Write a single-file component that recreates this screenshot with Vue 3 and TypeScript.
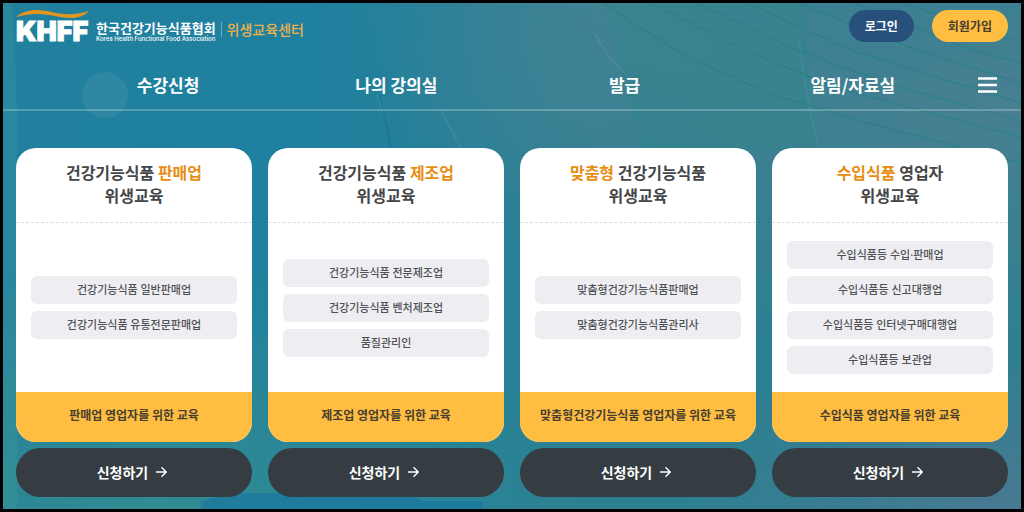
<script setup lang="ts">
interface TitlePart {
  text: string
  accent: boolean
}

interface Course {
  id: string
  title: TitlePart[]
  items: string[]
  note: string
}

const menu: string[] = ['수강신청', '나의 강의실', '발급', '알림/자료실']

const courses: Course[] = [
  {
    id: 'sales',
    title: [
      { text: '건강기능식품', accent: false },
      { text: '판매업', accent: true },
    ],
    items: ['건강기능식품 일반판매업', '건강기능식품 유통전문판매업'],
    note: '판매업 영업자를 위한 교육',
  },
  {
    id: 'manufacture',
    title: [
      { text: '건강기능식품', accent: false },
      { text: '제조업', accent: true },
    ],
    items: ['건강기능식품 전문제조업', '건강기능식품 벤처제조업', '품질관리인'],
    note: '제조업 영업자를 위한 교육',
  },
  {
    id: 'custom',
    title: [
      { text: '맞춤형', accent: true },
      { text: '건강기능식품', accent: false },
    ],
    items: ['맞춤형건강기능식품판매업', '맞춤형건강기능식품관리사'],
    note: '맞춤형건강기능식품 영업자를 위한 교육',
  },
  {
    id: 'import',
    title: [
      { text: '수입식품', accent: true },
      { text: '영업자', accent: false },
    ],
    items: ['수입식품등 수입·판매업', '수입식품등 신고대행업', '수입식품등 인터넷구매대행업', '수입식품등 보관업'],
    note: '수입식품 영업자를 위한 교육',
  },
]
</script>

<template>
  <div class="page">
    <svg class="backdrop" viewBox="0 0 1018 506" preserveAspectRatio="none" aria-hidden="true">
      <circle cx="102" cy="92" r="23" fill="#8fc0c4" opacity="0.13" />
      <path d="M9 0 Q13 60 14 110 V506 H0 V0 Z" fill="#5fae9f" opacity="0.16" />
      <path d="M376 92 Q384 120 388 148" fill="none" stroke="#0f6690" stroke-width="2" opacity="0.35" />
      <path d="M374 92 L380 110 M438 108 L460 148" fill="none" stroke="#9cc9d4" stroke-width="2" opacity="0.12" />
      <path d="M592 30 Q604 55 622 70 M796 36 Q802 90 816 148" fill="none" stroke="#9cc9d4" stroke-width="2" opacity="0.12" />
      <path d="M600 0 L800 0 L816 148 L640 148 Z" fill="#1f8a86" opacity="0.18" />
      <g fill="none" stroke="#14807f" stroke-width="1" opacity="0.6">
        <path d="M600 0 L680 52 L765 90 L865 120 L1018 160" />
        <path d="M648 0 L740 46 L830 84 L1018 134" />
        <path d="M694 0 L790 46 L890 82 L1018 118" />
        <path d="M744 0 L850 48 L1018 100" />
        <path d="M796 0 L900 42 L1018 80" />
        <path d="M850 0 L960 44 L1018 60" />
        <path d="M900 0 L1018 40" />
      </g>
      <path d="M198 498 L230 490 H400 L420 498 H480 V506 H198 Z" fill="#126fa6" opacity="0.5" />
      <g fill="none" stroke="#33888e" stroke-width="1" opacity="0.6">
        <path d="M840 506 L1018 436" />
        <path d="M880 506 L1018 452" />
        <path d="M920 506 L1018 468" />
      </g>
    </svg>

    <header class="header">
      <div class="topbar">
        <a class="logo" href="#">
          <span class="mark">
            <svg class="wave" viewBox="0 0 73 10" aria-hidden="true">
              <path
                d="M0 7 C6 2 13 0 21 0 C32 0 40 4 49 4 C58 5 65 3 73 1 C67 7 61 8 54 8 C44 8 34 4 22 4 C14 4 8 5 0 7 Z"
                fill="#e2961f"
              />
            </svg>
            <span class="initials">KHFF</span>
          </span>
          <span class="names">
            <span class="name-ko">한국건강기능식품협회</span>
            <span class="name-en">Korea Health Functional Food Association</span>
          </span>
          <span class="center-name">위생교육센터</span>
        </a>
        <div class="account">
          <button type="button" class="pill login">로그인</button>
          <button type="button" class="pill join">회원가입</button>
        </div>
      </div>
      <div class="menubar">
        <nav class="nav">
          <a v-for="entry in menu" :key="entry" href="#">{{ entry }}</a>
        </nav>
        <button type="button" class="all-menu" aria-label="전체메뉴">
          <svg width="19" height="16" viewBox="0 0 19 16" aria-hidden="true">
            <path d="M0 1.5H19M0 8H19M0 14.5H19" stroke="#fff" stroke-width="2.4" />
          </svg>
        </button>
      </div>
    </header>

    <main class="courses">
      <section v-for="course in courses" :key="course.id" class="course">
        <article class="card">
          <h2 class="title">
            <template v-for="(part, index) in course.title" :key="part.text">
              <template v-if="index > 0">{{ ' ' }}</template>
              <span :class="{ accent: part.accent }">{{ part.text }}</span>
            </template>
            <br />위생교육
          </h2>
          <ul class="items">
            <li v-for="item in course.items" :key="item">{{ item }}</li>
          </ul>
          <p class="note">{{ course.note }}</p>
        </article>
        <button type="button" class="apply">
          신청하기
          <svg width="11" height="12" viewBox="0 0 11 12" aria-hidden="true">
            <path d="M0 6H10M5.5 1.2L10.2 6L5.5 10.8" fill="none" stroke="#fff" stroke-width="1.4" />
          </svg>
        </button>
      </section>
    </main>
  </div>
</template>

<style>
body {
  background: #000;
}
</style>

<style scoped>
.page {
  position: relative;
  box-sizing: border-box;
  min-height: 100vh;
  display: flex;
  flex-direction: column;
  border: 3px solid #000;
  font-family: 'Noto Sans CJK KR', sans-serif;
  color: #fff;
  background:
    radial-gradient(ellipse at 100% 20%, rgba(78, 128, 146, 0.8), transparent 45%),
    radial-gradient(ellipse at 60% 0%, rgba(70, 132, 150, 0.7), transparent 30%),
    radial-gradient(ellipse at 100% 100%, rgba(76, 120, 146, 0.9), transparent 25%),
    radial-gradient(ellipse at 15% 100%, rgba(52, 140, 144, 0.9), transparent 35%),
    linear-gradient(90deg, #20809e 0%, #1f809f 30%, #2b8092 55%, #2b8090 100%);
}

.backdrop {
  position: absolute;
  inset: 0;
  width: 100%;
  height: 100%;
}

.header,
.courses {
  position: relative;
}

.header {
  border-bottom: 2px solid rgba(255, 255, 255, 0.24);
}

.topbar {
  display: flex;
  justify-content: space-between;
  align-items: flex-start;
  padding: 7px 13px;
}

.logo {
  display: flex;
  align-items: flex-end;
  color: #fff;
  text-decoration: none;
  white-space: nowrap;
}

.mark {
  display: flex;
  flex-direction: column;
  width: 73px;
  margin-right: 7px;
}

.wave {
  display: block;
  height: 10px;
}

.initials {
  font-family: Inter, sans-serif;
  font-weight: 900;
  font-size: 27px;
  line-height: 24px;
  -webkit-text-stroke: 1px #fff;
}

.names {
  display: flex;
  flex-direction: column;
  margin-bottom: 1px;
  padding-right: 5px;
}

.name-ko {
  font-size: 13px;
  line-height: 14px;
  font-weight: 700;
}

.name-en {
  font-family: Inter, sans-serif;
  font-size: 6px;
  line-height: 8px;
  font-weight: 500;
}

.center-name {
  margin-bottom: 7px;
  padding-left: 5px;
  border-left: 1px solid rgba(255, 255, 255, 0.35);
  font-size: 14px;
  line-height: 15px;
  font-weight: 500;
  color: #eeb14b;
}

.account {
  display: flex;
  gap: 18px;
}

.pill {
  height: 32px;
  padding: 0 16px;
  border: 0;
  border-radius: 16px;
  font: 700 12px/18px 'Noto Sans CJK KR', sans-serif;
}

.login {
  background: #27517c;
  color: #fff;
}

.join {
  background: #ffbd42;
  color: #47402f;
}

.menubar {
  display: flex;
  align-items: center;
  box-sizing: border-box;
  height: 58px;
  padding: 10px 13px 0 51px;
}

.nav {
  flex: 1;
  display: grid;
  grid-template-columns: repeat(4, 1fr);
  text-align: center;
}

.nav a {
  color: #fff;
  text-decoration: none;
  font-size: 17px;
  line-height: 24px;
  font-weight: 700;
}

.all-menu {
  display: flex;
  justify-content: center;
  align-items: center;
  width: 41px;
  height: 32px;
  padding: 0;
  border: 0;
  background: none;
}

.courses {
  flex: 1;
  display: grid;
  grid-template-columns: repeat(4, minmax(0, 1fr));
  gap: 16px;
  padding: 37px 13px 12px;
}

.course {
  display: flex;
  flex-direction: column;
  gap: 6px;
}

.card {
  flex: 1;
  display: flex;
  flex-direction: column;
  overflow: hidden;
  border-radius: 20px;
  background: #fff;
  color: #454648;
  text-align: center;
}

.title {
  margin: 0;
  padding: 13px 0 15px;
  border-bottom: 1px dashed #dedede;
  font-size: 16px;
  line-height: 23px;
  font-weight: 700;
}

.accent {
  color: #e78d14;
}

.items {
  flex: 1;
  display: flex;
  flex-direction: column;
  justify-content: center;
  gap: 7px;
  margin: 0;
  padding: 0 15px;
  list-style: none;
}

.items li {
  border-radius: 6px;
  background: #eeeef2;
  color: #505155;
  font-family: 'Noto Sans', 'Noto Sans CJK KR', sans-serif;
  font-size: 11px;
  line-height: 28px;
  font-weight: 500;
}

.note {
  margin: 0;
  padding-bottom: 4px;
  background: #ffbd42;
  color: #47402f;
  font-size: 12px;
  line-height: 46px;
  font-weight: 700;
  white-space: nowrap;
}

.apply {
  display: flex;
  justify-content: center;
  align-items: center;
  gap: 8px;
  height: 49px;
  padding: 0 10px 2px 6px;
  border: 0;
  border-radius: 25px;
  background: #353d42;
  color: #fff;
  font: 700 14px/20px 'Noto Sans CJK KR', sans-serif;
}
</style>
